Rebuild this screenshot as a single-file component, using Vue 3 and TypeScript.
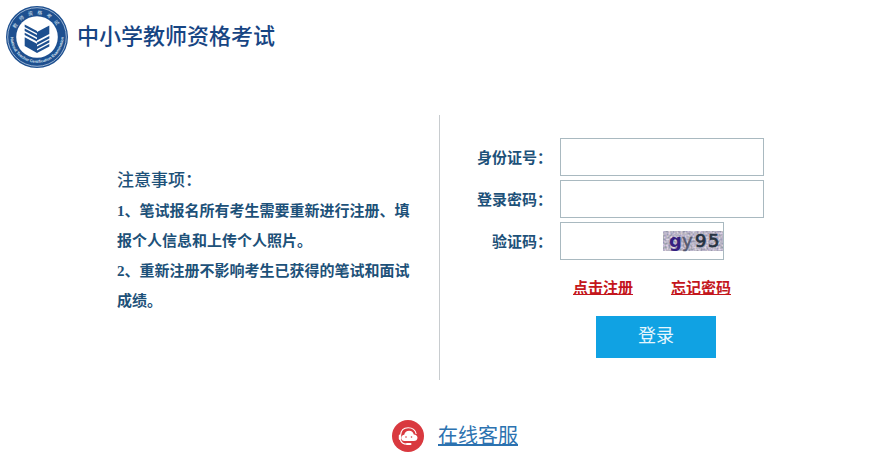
<script setup lang="ts">
import { ref } from 'vue'

const idNumber = ref('')
const password = ref('')
const captcha = ref('')

const notices: string[] = [
  '1、笔试报名所有考生需要重新进行注册、填报个人信息和上传个人照片。',
  '2、重新注册不影响考生已获得的笔试和面试成绩。',
]

function login(): void {
  password.value = ''
  captcha.value = ''
}
</script>

<template>
  <div class="page" lang="zh-CN">
    <header class="header">
      <svg class="seal" viewBox="0 0 62 62" aria-hidden="true">
        <defs>
          <path id="seal-top" d="M8.5 31a22.500 22.500 0 0 1 45 0" />
          <path id="seal-bottom" d="M4.500 28a26.600 26.600 0 1 0 53 0" />
        </defs>
        <circle cx="31" cy="31" r="31" fill="#1d4f8f" />
        <circle cx="31" cy="31" r="29.300" fill="none" stroke="#b9cce2" stroke-width="0.800" />
        <circle cx="31" cy="31" r="20.800" fill="#fff" />
        <text class="seal-cn"><textPath href="#seal-top" startOffset="50%">教师资格考试</textPath></text>
        <text class="seal-en"><textPath href="#seal-bottom" startOffset="50%">National Teacher Certification Examination</textPath></text>
        <g fill="#1d4f8f">
          <path d="M31 26 43.300 19.500v8.500L31 34.500z" />
          <path d="M18.700 18.500 31 25v2.400l-12.300-6.500z" />
          <path d="M18.700 22.600 31 29.100v2.400L18.700 25z" />
          <path d="M18.700 26.700 31 33.200v2.400l-12.300-6.500z" />
          <path d="M18.700 31.200 31 37.700V47l-12.300-7z" />
          <path d="M31 36.500 43.300 30v2.400L31 38.900z" />
          <path d="M31 40.500 43.300 34v2.400L31 42.900z" />
          <path d="M31 44.500 43.300 38v2.400L31 47z" />
        </g>
      </svg>
      <h1 class="title">中小学教师资格考试</h1>
    </header>

    <main class="main">
      <section class="notice-panel">
        <div class="notice">
          <h2 class="notice-title">注意事项：</h2>
          <p v-for="item in notices" :key="item" class="notice-item">{{ item }}</p>
        </div>
      </section>

      <form class="login" @submit.prevent="login">
        <div class="row">
          <label for="id-number">身份证号：</label>
          <input id="id-number" v-model="idNumber" class="field" type="text" />
        </div>
        <div class="row">
          <label for="password">登录密码：</label>
          <input id="password" v-model="password" class="field" type="password" />
        </div>
        <div class="row">
          <label for="captcha">验证码：</label>
          <div class="field captcha">
            <input id="captcha" v-model="captcha" type="text" />
            <svg class="captcha-image" viewBox="0 0 60 20">
              <defs>
                <filter id="grain" x="0" y="0" width="100%" height="100%" color-interpolation-filters="sRGB">
                  <feTurbulence type="fractalNoise" baseFrequency="0.500" numOctaves="2" seed="4" />
                  <feColorMatrix values="0.600 0 0 0 0.430  0.500 0.100 0 0 0.410  0.400 0 0.200 0 0.480  0 0 0 0 1" />
                </filter>
              </defs>
              <rect width="60" height="20" filter="url(#grain)" />
              <text x="6" y="16" fill="#35207f" font-weight="bold">g</text>
              <text x="19" y="16" fill="#555a70" stroke="#555a70" stroke-width="0.500">y</text>
              <text x="32" y="16" fill="#263342" stroke="#263342" stroke-width="0.700">9</text>
              <text x="45" y="16" fill="#263342" stroke="#263342" stroke-width="0.700">5</text>
            </svg>
          </div>
        </div>
        <div class="links">
          <a href="#register">点击注册</a>
          <a href="#forgot">忘记密码</a>
        </div>
        <button class="submit" type="submit">登录</button>
      </form>
    </main>

    <footer class="footer">
      <svg class="service-icon" viewBox="0 0 32 32" aria-hidden="true">
        <circle cx="16" cy="16" r="16" fill="#d9393f" />
        <path d="M8.500 15.500C8.800 10.500 12 7.700 16.200 7.700s7.200 2.300 8 6.300" fill="none" stroke="#fff" stroke-width="1.100" />
        <rect x="6.800" y="14.500" width="2.400" height="5.500" rx="1.200" fill="#fff" />
        <path d="M12.500 21c-2 0-3.200-1.300-3.200-3 0-1.800 1.300-3 2.900-3.200.7-2.600 2.500-4.100 4.900-4.100 2.500 0 4.200 1.500 4.700 3.700 2.200.1 3.700 1.500 3.700 3.300 0 2-1.500 3.300-3.700 3.300z" fill="#fff" />
        <path d="M8.300 19.500c.8 3.200 3.300 4.600 6.500 4.600" fill="none" stroke="#fff" stroke-width="1.100" />
        <rect x="14" y="23" width="5.500" height="2" rx="1" fill="#fff" />
        <g fill="#d9393f"><circle cx="14" cy="17" r=".8" /><circle cx="19.500" cy="17" r=".8" /></g>
      </svg>
      <a href="#service">在线客服</a>
    </footer>
  </div>
</template>

<style>
body {
  margin: 0;
  background: #fff;
}
</style>

<style scoped>
.page {
  box-sizing: border-box;
  padding: 6px 14px 0 0;
  color: #1d5179;
  font-family: "Liberation Serif", "Noto Sans CJK SC", sans-serif;
  font-size: 15px;
}

.header {
  display: flex;
  align-items: center;
  gap: 9px;
  padding-left: 6px;
}

.seal {
  width: 62px;
  height: 62px;
}

.seal text {
  fill: #dbe6f2;
  text-anchor: middle;
  font-family: "Liberation Sans", "Noto Sans CJK SC", sans-serif;
}

.seal-cn {
  font-size: 5px;
  letter-spacing: 4px;
}

.seal .seal-en {
  font-size: 4px;
  font-weight: bold;
}

.title {
  margin: 0;
  color: #174583;
  font-size: 22px;
  font-weight: 500;
  line-height: 32px;
}

.main {
  display: grid;
  grid-template-columns: 1fr 1fr;
  margin-top: 47px;
}

.notice-panel {
  display: flex;
  justify-content: flex-end;
  padding: 50px 28px 64px 0;
  border-right: 1px solid #c8cccf;
}

.notice {
  width: 294px;
}

.notice-title {
  margin: 0;
  font-size: 17px;
  font-weight: 500;
  line-height: 31px;
}

.notice-item {
  margin: 0;
  font-weight: bold;
  line-height: 30px;
}

.login {
  display: flex;
  flex-direction: column;
  align-items: flex-start;
  gap: 4px;
  padding: 23px 0 22px 36px;
}

.row {
  display: flex;
  align-items: center;
  gap: 8px;
}

.row label {
  width: 76px;
  padding-bottom: 2px;
  font-weight: bold;
  text-align: right;
}

.field {
  box-sizing: border-box;
  width: 204px;
  height: 38px;
  padding: 0 8px;
  border: 1px solid #a9b9c0;
  border-radius: 0;
  background: #fff;
}

.captcha {
  display: flex;
  align-items: center;
  width: 164px;
  padding: 0;
}

.captcha input {
  flex: 1;
  min-width: 0;
  height: 100%;
  box-sizing: border-box;
  padding: 0 8px;
  border: 0;
  background: transparent;
}

.captcha-image {
  width: 60px;
  height: 20px;
  overflow: visible;
}

.captcha-image text {
  font-family: "DejaVu Sans", sans-serif;
  font-size: 18px;
}

.links {
  display: flex;
  justify-content: space-between;
  width: 158px;
  margin: 13px 0 0 97px;
}

.links a {
  color: #c4161c;
  font-weight: bold;
  line-height: 22px;
}

.submit {
  width: 120px;
  height: 42px;
  margin: 13px 0 0 120px;
  padding: 0 0 6px;
  border: 0;
  background: #10a2e3;
  color: #e6f6fd;
  font-family: inherit;
  font-size: 18px;
  cursor: pointer;
}

.footer {
  display: flex;
  align-items: center;
  justify-content: center;
  gap: 14px;
  padding: 40px 0 16px 30px;
}

.service-icon {
  width: 32px;
  height: 32px;
}

.footer a {
  color: #2c72b0;
  font-size: 20px;
  line-height: 28px;
}
</style>
